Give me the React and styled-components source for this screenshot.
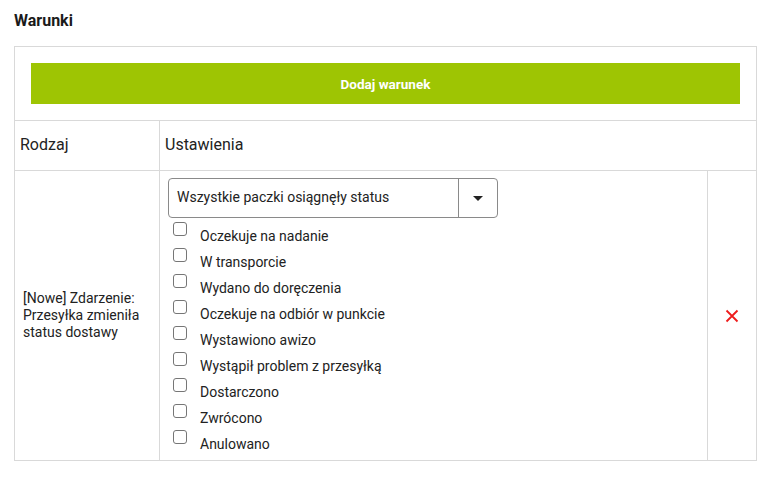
import React from 'react';
import styled, { createGlobalStyle } from 'styled-components';

const GlobalStyle = createGlobalStyle`
  *, *::before, *::after {
    box-sizing: border-box;
  }
  body {
    margin: 0;
    background: #fff;
    font-family: Roboto, "Liberation Sans", sans-serif;
    color: #222;
  }
`

const Page = styled.div`
  padding: 10px 17px 0 14px;
`

const Title = styled.h3`
  margin: 0 0 15px;
  font-size: 16px;
  font-weight: 700;
  line-height: 21px;
  color: #1a1a1a;
`

const Grid = styled.div`
  display: grid;
  grid-template-columns: 144px 1fr 48px;
  gap: 1px;
  padding: 1px;
  background: #d9d9d9;
`

const Cell = styled.div`
  background: #fff;
  grid-column: ${props => props.span ? `span ${props.span}` : 'auto'};
`

const ButtonCell = styled(Cell)`
  padding: 16px;
`

const AddButton = styled.button`
  display: block;
  width: 100%;
  height: 41px;
  border: none;
  background: #9ec503;
  color: #fff;
  font-family: inherit;
  font-size: 13.5px;
  font-weight: 700;
  cursor: pointer;
`

const HeadCell = styled(Cell)`
  height: 49px;
  display: flex;
  align-items: center;
  padding: 0 5px 2px;
  font-size: 16px;
  color: #222;
`

const TypeCell = styled(Cell)`
  display: flex;
  align-items: center;
  padding: 0 8px;
  font-size: 14px;
  line-height: 17px;
  color: #222;
`

const SettingsCell = styled(Cell)`
  padding: 7px 8px 4px;
`

const Select = styled.div`
  display: flex;
  width: 330px;
  height: 40px;
  border: 1px solid #8a8a8a;
  border-radius: 4px;
  font-size: 14px;
  color: #222;
`

const SelectValue = styled.div`
  flex: 1;
  display: flex;
  align-items: center;
  padding: 0 8px 2px;
`

const SelectArrow = styled.div`
  width: 39px;
  border-left: 1px solid #8a8a8a;
  display: flex;
  align-items: center;
  justify-content: center;
  &::after {
    content: '';
    border-left: 5px solid transparent;
    border-right: 5px solid transparent;
    border-top: 5px solid #222;
  }
`

const CheckList = styled.div`
  margin-top: 4px;
`

const CheckRow = styled.label`
  display: flex;
  align-items: flex-start;
  height: 26px;
  font-size: 14px;
  color: #222;
  cursor: pointer;
`

const Box = styled.span`
  width: 14px;
  height: 14px;
  margin: 0 13px 0 5px;
  border: 1px solid #767676;
  border-radius: 3px;
  flex: none;
`

const CheckText = styled.span`
  padding-top: 4px;
  line-height: 20px;
`

const RemoveCell = styled(Cell)`
  display: flex;
  align-items: center;
  justify-content: center;
`

const RemoveIcon = () => (
  <svg width="14" height="14" viewBox="0 0 14 14">
    <path d="M1.5 1.5 L12.5 12.5 M12.5 1.5 L1.5 12.5" stroke="#ee1c1c" strokeWidth="1.8" fill="none" />
  </svg>
);

const statuses = [
  'Oczekuje na nadanie',
  'W transporcie',
  'Wydano do doręczenia',
  'Oczekuje na odbiór w punkcie',
  'Wystawiono awizo',
  'Wystąpił problem z przesyłką',
  'Dostarczono',
  'Zwrócono',
  'Anulowano',
];

const App = () => (
  <Page>
    <GlobalStyle />
    <Title>Warunki</Title>
    <Grid>
      <ButtonCell span={3}>
        <AddButton>Dodaj warunek</AddButton>
      </ButtonCell>
      <HeadCell>Rodzaj</HeadCell>
      <HeadCell span={2}>Ustawienia</HeadCell>
      <TypeCell>[Nowe] Zdarzenie: Przesyłka zmieniła status dostawy</TypeCell>
      <SettingsCell>
        <Select>
          <SelectValue>Wszystkie paczki osiągnęły status</SelectValue>
          <SelectArrow />
        </Select>
        <CheckList>
          {statuses.map(s => (
            <CheckRow key={s}>
              <Box />
              <CheckText>{s}</CheckText>
            </CheckRow>
          ))}
        </CheckList>
      </SettingsCell>
      <RemoveCell>
        <RemoveIcon />
      </RemoveCell>
    </Grid>
  </Page>
);

export default App;
